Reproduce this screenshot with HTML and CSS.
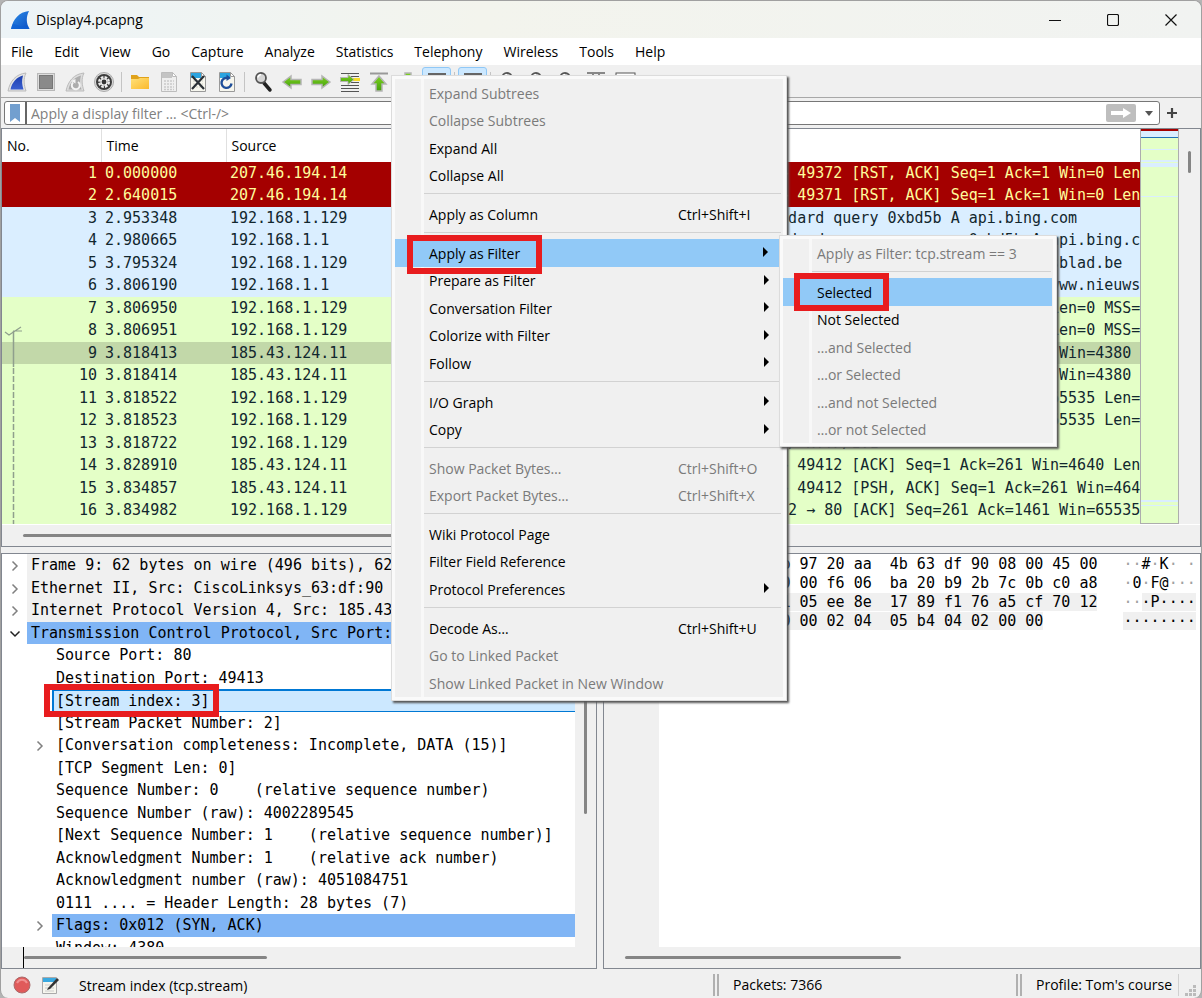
FILE: index.html
```html
<!DOCTYPE html>
<html lang="en">
<head>
    <meta charset="UTF-8">
    <meta name="viewport" content="width=device-width, initial-scale=1.0">
    <title>Display4.pcapng</title>
    <link rel="stylesheet" href="styles.css">
</head>
<body>
    <!-- Shared symbols -->
    <svg class="defs" width="0" height="0" aria-hidden="true">
        <defs>
            <linearGradient id="finBlue" x1="0" y1="0" x2="1" y2="1">
                <stop offset="0" stop-color="#2f8fe8"/>
                <stop offset="1" stop-color="#0a4fc4"/>
            </linearGradient>
            <linearGradient id="finDark" x1="0" y1="0" x2="0" y2="1">
                <stop offset="0" stop-color="#1d3fae"/>
                <stop offset="1" stop-color="#3a5fd0"/>
            </linearGradient>
            <linearGradient id="green" x1="0" y1="0" x2="0" y2="1">
                <stop offset="0" stop-color="#7ed321"/>
                <stop offset="1" stop-color="#45a00c"/>
            </linearGradient>
            <linearGradient id="folder" x1="0" y1="0" x2="1" y2="1">
                <stop offset="0" stop-color="#ffe17a"/>
                <stop offset="1" stop-color="#fbb92c"/>
            </linearGradient>
            <symbol id="chevron" viewBox="0 0 12 12"><path d="M3.500 1.500l4.500 4.500-4.500 4.500" fill="none" stroke="currentColor" stroke-width="1.500"/></symbol>
            <symbol id="magnifier" viewBox="0 0 22 22">
                <path d="M12 12l6 7" stroke="#222" stroke-width="3.500" stroke-linecap="round"/>
                <circle cx="9" cy="7" r="5" fill="#d6d6d6" stroke="#555" stroke-width="1.800"/>
                <path d="M6 6.500a3.500 3.500 0 0 1 3-3" stroke="#fff" stroke-width="1.500" fill="none"/>
            </symbol>
        </defs>
    </svg>

    <div class="window">
        <header class="titlebar">
            <svg class="app-icon" width="20" height="20" viewBox="0 0 20 20"><path d="M1 19C3 9 9 2 19 1c-3 6-3 12 .5 18z" fill="url(#finBlue)"/><path d="M1 19c.5-2 1-3.500 2-5.500 5 2.500 10 3.500 15.500 3l1 2.500z" fill="#0b5fd6" opacity=".6"/></svg>
            <h1 class="title">Display4.pcapng</h1>
            <div class="window-controls">
                <button aria-label="Minimize"><svg width="12" height="12"><path d="M0 6.500h12" stroke="#111"/></svg></button>
                <button aria-label="Maximize"><svg width="12" height="12"><rect x=".5" y=".5" width="11" height="11" rx="1.500" fill="none" stroke="#111" stroke-width="1.200"/></svg></button>
                <button aria-label="Close"><svg width="12" height="12"><path d="M.5 .5l11 11M11.500 .5l-11 11" stroke="#111" stroke-width="1.200"/></svg></button>
            </div>
        </header>

        <nav class="menubar">
            <button>File</button>
            <button>Edit</button>
            <button>View</button>
            <button>Go</button>
            <button>Capture</button>
            <button>Analyze</button>
            <button>Statistics</button>
            <button>Telephony</button>
            <button>Wireless</button>
            <button>Tools</button>
            <button>Help</button>
        </nav>

        <div class="toolbar">
            <button aria-label="Start capture"><svg width="22" height="22" viewBox="0 0 22 22"><path d="M2 20C4 10 10 3 20 2c-3 6-2 12 0 18z" fill="#e4e4e4" stroke="#bbb"/><path d="M4.500 18.500C6 11 11 6 17 4.500c-1.500 5-1 9.500 .5 14z" fill="url(#finDark)"/></svg></button>
            <button aria-label="Stop capture"><svg width="22" height="22" viewBox="0 0 22 22"><rect x="2.500" y="2.500" width="17" height="17" fill="#ddd" stroke="#b8b8b8"/><rect x="4.500" y="4.500" width="13" height="13" fill="#8a8a8a" stroke="#777"/></svg></button>
            <button aria-label="Restart capture"><svg width="22" height="22" viewBox="0 0 22 22"><path d="M2 20C4 10 10 3 20 2c-3 6-2 12 0 18z" fill="#ddd" stroke="#bbb"/><path d="M4.500 18.500C6 11 11 6 17 4.500c-1.500 5-1 9.500 .5 14z" fill="#adadad"/><path d="M9 11.500a4 4 0 1 0 5-.5" fill="none" stroke="#f4f4f4" stroke-width="2"/><path d="M7 10l4.500-2v4.500z" fill="#f4f4f4"/></svg></button>
            <button aria-label="Capture options"><svg width="22" height="22" viewBox="0 0 22 22"><circle cx="11" cy="11" r="9.500" fill="#ddd" stroke="#aaa"/><circle cx="11" cy="11" r="8" fill="#3c3c3c"/><circle cx="11" cy="11" r="4.800" fill="none" stroke="#eee" stroke-width="2.400" stroke-dasharray="2.600 1.170"/><circle cx="11" cy="11" r="3.700" fill="#eee"/><circle cx="11" cy="11" r="2.400" fill="#333"/></svg></button>
            <span class="tool-sep"></span>
            <button aria-label="Open"><svg width="22" height="22" viewBox="0 0 22 22"><path d="M2 4h6l2 2h10v12H2z" fill="#e0a21a"/><path d="M2 8h7l2-1h9v11H2z" fill="url(#folder)"/></svg></button>
            <button aria-label="Save"><svg width="22" height="22" viewBox="0 0 22 22"><path d="M3.500 1.500h11l4 4v15h-15z" fill="#efefef" stroke="#bdbdbd"/><path d="M4 2h10v5H4z" fill="#c4c4c4"/><path d="M14.500 1.500v4h4z" fill="#fff" stroke="#bbb"/><path d="M6 10h10M6 13h10M6 16h10M6 18.500h10" stroke="#cacaca" stroke-width="1.600" stroke-dasharray="2 1"/></svg></button>
            <button aria-label="Close file"><svg width="22" height="22" viewBox="0 0 22 22"><path d="M3.500 1.500h11l4 4v15h-15z" fill="#f6f6ee" stroke="#999"/><path d="M4 2h10v5H4z" fill="#2ba4e0"/><path d="M14.500 1.500v4h4z" fill="#fff" stroke="#999"/><path d="M6 10h10M6 13h10M6 16h10" stroke="#d0d0c4" stroke-dasharray="2 1"/><path d="M5 5l12 13M17 5L5 18" stroke="#2a3036" stroke-width="2.200"/></svg></button>
            <button aria-label="Reload file"><svg width="22" height="22" viewBox="0 0 22 22"><path d="M3.500 1.500h11l4 4v15h-15z" fill="#f6f6ee" stroke="#999"/><path d="M4 2h10v5H4z" fill="#2ba4e0"/><path d="M14.500 1.500v4h4z" fill="#fff" stroke="#999"/><path d="M15.500 12.500a5 5 0 1 1-4-5.500" fill="none" stroke="#1f4f9a" stroke-width="2.400"/><path d="M10.500 3.500l4.500 3.500-4.500 3z" fill="#1f4f9a"/></svg></button>
            <span class="tool-sep"></span>
            <button aria-label="Find packet"><svg width="22" height="22"><use href="#magnifier"/></svg></button>
            <button aria-label="Previous packet"><svg width="22" height="22" viewBox="0 0 22 22"><path d="M2 11l8-6v3.500h10v5H10V17z" fill="url(#green)" stroke="#b5b5b5" stroke-width="1.500"/></svg></button>
            <button aria-label="Next packet"><svg width="22" height="22" viewBox="0 0 22 22"><path d="M20 11l-8-6v3.500H2v5h10V17z" fill="url(#green)" stroke="#b5b5b5" stroke-width="1.500"/></svg></button>
            <button aria-label="Go to packet"><svg width="22" height="22" viewBox="0 0 22 22"><path d="M2 2.500h18M12 5.500h8M12 11.500h8M2 14.500h18M2 17.500h18M2 20.500h18" stroke="#555" stroke-width="1.200"/><path d="M13 8.500h8" stroke="#f7dc2a" stroke-width="3"/><path d="M15 8.500L9 3.500v3H1.500v4H9v3z" fill="url(#green)" stroke="#b5b5b5"/></svg></button>
            <button aria-label="First packet"><svg width="22" height="22" viewBox="0 0 22 22"><path d="M2 2.500h18" stroke="#999" stroke-width="2"/><path d="M11 5l7 8h-4v7H8v-7H4z" fill="url(#green)" stroke="#b5b5b5" stroke-width="1.500"/></svg></button>
            <button aria-label="Last packet"><svg width="22" height="22" viewBox="0 0 22 22"><path d="M11 17L4 9h4V2h6v7h4z" fill="url(#green)" stroke="#b5b5b5" stroke-width="1.500"/><path d="M2 19.500h18" stroke="#999" stroke-width="2"/></svg></button>
            <button class="toggled" aria-label="Auto scroll" aria-pressed="true"><svg width="22" height="22" viewBox="0 0 22 22"><path d="M2 3h18M2 7h18M2 11h18M2 15h18" stroke="#666" stroke-width="2"/></svg></button>
            <span class="tool-sep"></span>
            <button class="toggled" aria-label="Colorize" aria-pressed="true"><svg width="22" height="22" viewBox="0 0 22 22"><path d="M2 3h18M2 7h18M2 11h18M2 15h18" stroke="#666" stroke-width="2"/></svg></button>
            <span class="tool-sep"></span>
            <button aria-label="Zoom in"><svg width="22" height="22"><use href="#magnifier"/></svg></button>
            <button aria-label="Zoom out"><svg width="22" height="22"><use href="#magnifier"/></svg></button>
            <button aria-label="Normal size"><svg width="22" height="22"><use href="#magnifier"/></svg></button>
            <button aria-label="Resize columns"><svg width="22" height="22" viewBox="0 0 22 22"><path d="M2 2h18M8 2v18M14 2v18" fill="none" stroke="#888" stroke-width="2"/></svg></button>
            <button aria-label="Reset layout"><svg width="22" height="22" viewBox="0 0 22 22"><rect x="2" y="2" width="19" height="17" fill="#fff" stroke="#555"/></svg></button>
        </div>

        <div class="filterbar">
            <div class="filter-box">
                <button class="bookmark" aria-label="Filter bookmarks"><svg width="12" height="18" viewBox="0 0 12 18"><path d="M1 0h10v18l-5-4-5 4z" fill="#729fcf"/></svg></button>
                <input type="text" class="filter-input" aria-label="Display filter" placeholder="Apply a display filter … &lt;Ctrl-/&gt;">
                <button class="apply" aria-label="Apply filter"><svg width="22" height="12" viewBox="0 0 22 12"><path d="M1 4h12V1l8 5-8 5V8H1z" fill="#fff"/></svg></button>
                <div class="history"><select aria-label="Recent filters"></select></div>
            </div>
            <button class="add" aria-label="Add filter button"><svg width="10" height="10"><path d="M5 0v10M0 5h10" stroke="#444" stroke-width="2.200"/></svg></button>
        </div>

        <section class="packet-list">
            <div class="packet-main">
                <div class="packet-view">
                    <table class="packets">
                        <colgroup><col class="col-no"><col class="col-time"><col class="col-source"><col></colgroup>
                        <thead>
                            <tr><th>No.</th><th>Time</th><th>Source</th><th></th></tr>
                        </thead>
                        <tbody>
                            <tr class="rst"><td>1</td><td>0.000000</td><td>207.46.194.14</td><td>80 → 49372 [RST, ACK] Seq=1 Ack=1 Win=0 Len=0</td></tr>
                            <tr class="rst"><td>2</td><td>2.640015</td><td>207.46.194.14</td><td>80 → 49371 [RST, ACK] Seq=1 Ack=1 Win=0 Len=0</td></tr>
                            <tr class="dns"><td>3</td><td>2.953348</td><td>192.168.1.129</td><td>Standard query 0xbd5b A api.bing.com</td></tr>
                            <tr class="dns"><td>4</td><td>2.980665</td><td>192.168.1.1</td><td>Standard query response 0xbd5b A api.bing.com</td></tr>
                            <tr class="dns"><td>5</td><td>3.795324</td><td>192.168.1.129</td><td>Standard query 0x2f6c A www.nieuwsblad.be</td></tr>
                            <tr class="dns"><td>6</td><td>3.806190</td><td>192.168.1.1</td><td>Standard query response 0x2f6c A www.nieuwsblad.be</td></tr>
                            <tr><td>7</td><td>3.806950</td><td>192.168.1.129</td><td>49412 → 80 [SYN] Seq=0 Win=65535 Len=0 MSS=1460</td></tr>
                            <tr><td>8</td><td>3.806951</td><td>192.168.1.129</td><td>49413 → 80 [SYN] Seq=0 Win=65535 Len=0 MSS=1460</td></tr>
                            <tr class="current"><td>9</td><td>3.818413</td><td>185.43.124.11</td><td>80 → 49413 [SYN, ACK] Seq=0 Ack=1 Win=4380 Len=0</td></tr>
                            <tr><td>10</td><td>3.818414</td><td>185.43.124.11</td><td>80 → 49412 [SYN, ACK] Seq=0 Ack=1 Win=4380 Len=0</td></tr>
                            <tr><td>11</td><td>3.818522</td><td>192.168.1.129</td><td>49413 → 80 [ACK] Seq=1 Ack=1 Win=65535 Len=0</td></tr>
                            <tr><td>12</td><td>3.818523</td><td>192.168.1.129</td><td>49412 → 80 [ACK] Seq=1 Ack=1 Win=65535 Len=0</td></tr>
                            <tr><td>13</td><td>3.818722</td><td>192.168.1.129</td><td>GET / HTTP/1.1</td></tr>
                            <tr><td>14</td><td>3.828910</td><td>185.43.124.11</td><td>80 → 49412 [ACK] Seq=1 Ack=261 Win=4640 Len=0</td></tr>
                            <tr><td>15</td><td>3.834857</td><td>185.43.124.11</td><td>80 → 49412 [PSH, ACK] Seq=1 Ack=261 Win=4640 Len=1460</td></tr>
                            <tr><td>16</td><td>3.834982</td><td>192.168.1.129</td><td>49412 → 80 [ACK] Seq=261 Ack=1461 Win=65535 Len=0</td></tr>
                        </tbody>
                    </table>
                    <!-- Conversation marker in the No. column -->
                    <svg class="related" width="24" height="200" viewBox="0 0 24 200">
                        <path d="M3 6l4 3 12-8M11 5h9" fill="none" stroke="#8f9f8d" stroke-width="1.200"/>
                        <path d="M11.500 5v36" stroke="#8f9f8d" stroke-width="1.500"/>
                        <path d="M11.500 42v158" stroke="#8f9f8d" stroke-width="1.500" stroke-dasharray="6 2"/>
                    </svg>
                </div>
                <div class="minimap"></div>
                <div class="vscroll"><span class="thumb packet-vthumb"></span></div>
            </div>
            <div class="hscroll"><span class="thumb packet-hthumb"></span></div>
        </section>

        <main class="panes">
            <section class="pane details">
                <div class="pane-main">
                    <ul class="tree">
                        <li class="proto"><svg class="twisty" width="12" height="12"><use href="#chevron"/></svg><span>Frame 9: 62 bytes on wire (496 bits), 62 bytes captured</span></li>
                        <li class="proto"><svg class="twisty" width="12" height="12"><use href="#chevron"/></svg><span>Ethernet II, Src: CiscoLinksys_63:df:90 (20:aa:4b:63:df:90)</span></li>
                        <li class="proto"><svg class="twisty" width="12" height="12"><use href="#chevron"/></svg><span>Internet Protocol Version 4, Src: 185.43.124.11</span></li>
                        <li class="proto marked"><svg class="twisty open" width="12" height="12"><use href="#chevron"/></svg><span>Transmission Control Protocol, Src Port: 80</span></li>
                        <li class="field"><span>Source Port: 80</span></li>
                        <li class="field"><span>Destination Port: 49413</span></li>
                        <li class="field selected"><span>[Stream index: 3]</span><i class="callout callout-stream"></i></li>
                        <li class="field"><span>[Stream Packet Number: 2]</span></li>
                        <li class="field"><svg class="twisty" width="12" height="12"><use href="#chevron"/></svg><span>[Conversation completeness: Incomplete, DATA (15)]</span></li>
                        <li class="field"><span>[TCP Segment Len: 0]</span></li>
                        <li class="field"><span>Sequence Number: 0    (relative sequence number)</span></li>
                        <li class="field"><span>Sequence Number (raw): 4002289545</span></li>
                        <li class="field"><span>[Next Sequence Number: 1    (relative sequence number)]</span></li>
                        <li class="field"><span>Acknowledgment Number: 1    (relative ack number)</span></li>
                        <li class="field"><span>Acknowledgment number (raw): 4051084751</span></li>
                        <li class="field"><span>0111 .... = Header Length: 28 bytes (7)</span></li>
                        <li class="field marked"><svg class="twisty" width="12" height="12"><use href="#chevron"/></svg><span>Flags: 0x012 (SYN, ACK)</span></li>
                        <li class="field"><span>Window: 4380</span></li>
                    </ul>
                    <div class="vscroll"><span class="thumb tree-vthumb"></span></div>
                </div>
                <div class="hscroll caret"><span class="thumb tree-hthumb"></span></div>
            </section>

            <section class="pane bytes">
                <div class="pane-main">
                    <div class="offsets">
                        <pre>0000
0010
0020
0030</pre>
                    </div>
                    <div class="dump">
                        <pre>00 16 23 cb 4b 97 20 aa  4b 63 df 90 08 00 45 00
00 30 8a 46 40 00 f6 06  ba 20 b9 2b 7c 0b c0 a8
01 81 <mark>00 50 c1 05 ee 8e  17 89 f1 76 a5 cf 70 12</mark>
<mark>11 1c d1 5c 00 00 02 04  05 b4 04 02 00 00</mark></pre>
                        <pre class="ascii"><s>··</s>#<s>·</s>K<s>·</s> <s>·</s>
<s>·</s>0<s>·</s>F@<s>···</s>
<s>··</s><mark>·P····</mark>
<mark>········</mark></pre>
                    </div>
                </div>
                <div class="hscroll"><span class="thumb bytes-hthumb"></span></div>
            </section>
        </main>

        <footer class="statusbar">
            <button aria-label="Expert information"><svg width="18" height="18"><circle cx="9" cy="9" r="8" fill="#e05a5a" stroke="#a86a6a"/><path d="M4 7a5.500 5.500 0 0 1 10 0" fill="none" stroke="#f09090" stroke-width="2"/></svg></button>
            <button aria-label="Capture comment"><svg width="18" height="18" viewBox="0 0 18 18"><path d="M.5 1.500h14v16H.5z" fill="#f6f6ee" stroke="#aaa"/><path d="M1 2h13v4H1z" fill="#3aa9e0"/><path d="M3 9h9M3 12h9M3 15h9" stroke="#ccc"/><path d="M6 12L15 2l2 2-9 9-3 1z" fill="#333"/></svg></button>
            <span class="status-field">Stream index (tcp.stream)</span>
            <span class="status-packets">Packets: 7366</span>
            <span class="status-profile">Profile: Tom's course</span>
            <svg class="grip" width="12" height="12"><path d="M8 0h3v3H8zM4 4h3v3H4zM8 4h3v3H8zM0 8h3v3H0zM4 8h3v3H4zM8 8h3v3H8z" fill="#bbb"/></svg>
        </footer>
    </div>

    <div class="context-menu main-menu" role="menu">
        <ul>
            <li><button disabled>Expand Subtrees</button></li>
            <li><button disabled>Collapse Subtrees</button></li>
            <li><button>Expand All</button></li>
            <li><button>Collapse All</button></li>
        </ul>
        <hr>
        <ul>
            <li><button>Apply as Column<kbd>Ctrl+Shift+I</kbd></button></li>
        </ul>
        <hr>
        <ul>
            <li class="has-sub active">
                <button>Apply as Filter</button>
                <i class="callout callout-apply"></i>
                <div class="context-menu sub-menu" role="menu">
                    <ul>
                        <li><button disabled>Apply as Filter: tcp.stream == 3</button></li>
                    </ul>
                    <hr>
                    <ul>
                        <li class="active"><button>Selected</button><i class="callout callout-selected"></i></li>
                        <li><button>Not Selected</button></li>
                        <li><button disabled>…and Selected</button></li>
                        <li><button disabled>…or Selected</button></li>
                        <li><button disabled>…and not Selected</button></li>
                        <li><button disabled>…or not Selected</button></li>
                    </ul>
                </div>
            </li>
            <li class="has-sub"><button>Prepare as Filter</button></li>
            <li class="has-sub"><button>Conversation Filter</button></li>
            <li class="has-sub"><button>Colorize with Filter</button></li>
            <li class="has-sub"><button>Follow</button></li>
        </ul>
        <hr>
        <ul>
            <li class="has-sub"><button>I/O Graph</button></li>
            <li class="has-sub"><button>Copy</button></li>
        </ul>
        <hr>
        <ul>
            <li><button disabled>Show Packet Bytes…<kbd>Ctrl+Shift+O</kbd></button></li>
            <li><button disabled>Export Packet Bytes…<kbd>Ctrl+Shift+X</kbd></button></li>
        </ul>
        <hr>
        <ul>
            <li><button>Wiki Protocol Page</button></li>
            <li><button>Filter Field Reference</button></li>
            <li class="has-sub"><button>Protocol Preferences</button></li>
        </ul>
        <hr>
        <ul>
            <li><button>Decode As…<kbd>Ctrl+Shift+U</kbd></button></li>
            <li><button disabled>Go to Linked Packet</button></li>
            <li><button disabled>Show Linked Packet in New Window</button></li>
        </ul>
    </div>
</body>
</html>
```
FILE: styles.css
```css
* {
    box-sizing: border-box;
}
body {
    margin: 0;
    background: #b4b4b4;
    color: #000;
    font-family: "Open Sans", "Noto Sans", sans-serif;
    font-size: 14px;
    overflow: hidden;
}
button {
    border: none;
    padding: 0;
    background: none;
    color: inherit;
    font: inherit;
}
ul {
    list-style: none;
    margin: 0;
    padding: 0;
}
.defs {
    position: absolute;
}
.window {
    display: flex;
    flex-direction: column;
    height: 100vh;
    background: #f0f0f0;
    border: 1px solid #a0a0a0;
    border-bottom: none;
    border-radius: 8px;
    overflow: hidden;
}

/* Title bar */
.titlebar {
    display: flex;
    align-items: center;
    flex: none;
    height: 37px;
    padding-left: 9px;
    background: linear-gradient(90deg, #edf4f7, #f3f4ed 40%, #f1f3f1);
}
.title {
    flex: 1;
    margin: 0 0 0 6px;
    font-size: 14px;
    font-weight: normal;
}
.window-controls {
    display: flex;
    margin-right: 1px;
}
.window-controls button {
    display: flex;
    align-items: center;
    justify-content: center;
    width: 58px;
    height: 36px;
}

/* Menu bar */
.menubar {
    display: flex;
    gap: 21px;
    flex: none;
    height: 27px;
    padding: 0 10px;
    background: #fff;
}

/* Toolbar */
.toolbar {
    display: flex;
    align-items: center;
    flex: none;
    height: 33px;
    padding: 1px 0 0 1px;
    border-bottom: 1px solid #a8a8a8;
}
.toolbar button {
    display: flex;
    align-items: center;
    justify-content: center;
    width: 29px;
    height: 29px;
    border-radius: 3px;
}
.toolbar .toggled {
    background: #cce8ff;
    border: 1px solid #90c8f6;
}
.tool-sep {
    width: 1px;
    height: 20px;
    margin: 0 3px;
    background: #c4c4c4;
}

/* Display filter */
.filterbar {
    display: flex;
    align-items: center;
    flex: none;
    gap: 7px;
    height: 30px;
    padding: 0 24px 0 3px;
}
.filter-box {
    display: flex;
    align-items: center;
    flex: 1;
    height: 24px;
    background: #fff;
    border: 1px solid #777;
    border-radius: 3px;
}
.bookmark {
    display: flex;
    align-items: center;
    justify-content: center;
    width: 22px;
    height: 22px;
    border-right: 2px solid #666;
}
.filter-input {
    flex: 1;
    min-width: 0;
    border: none;
    outline: none;
    padding: 0 4px;
    background: none;
    font: inherit;
}
.filter-input::placeholder {
    color: #808080;
    opacity: 1;
}
.apply {
    display: flex;
    align-items: center;
    justify-content: center;
    width: 30px;
    height: 18px;
    border-radius: 2px;
    background: #bebebe;
}
.history {
    display: flex;
    align-items: center;
    justify-content: center;
    position: relative;
    width: 20px;
    height: 22px;
    margin-left: 3px;
}
.history select {
    appearance: none;
    width: 100%;
    height: 100%;
    border: none;
    background: none;
}
.history::after {
    content: "";
    position: absolute;
    border: 4px solid transparent;
    border-top: 5px solid #555;
    border-bottom: none;
    pointer-events: none;
}
.add {
    display: flex;
}

/* Packet list */
.packet-list {
    flex: none;
    border: 1px solid #828790;
}
.packet-main {
    display: flex;
    border-bottom: 1px solid #fff;
}
.packet-view {
    position: relative;
    flex: 1;
    min-width: 0;
    padding-bottom: 2px;
    overflow: hidden;
    background: #e4ffc7;
}
.packets {
    width: 100%;
    table-layout: fixed;
    border-collapse: collapse;
    color: #12272e;
    font-family: "DejaVu Sans Mono", monospace;
    font-size: 15px;
    line-height: 22px;
    white-space: nowrap;
}
.col-no {
    width: 99px;
}
.col-time {
    width: 125px;
}
.col-source {
    width: 522px;
}
.packets th {
    height: 33px;
    padding: 0 5px;
    background: #fff;
    border-right: 1px solid #e0e0e0;
    color: #000;
    font-family: "Open Sans", "Noto Sans", sans-serif;
    font-size: 14px;
    font-weight: normal;
    text-align: left;
}
.packets th:last-child {
    border-right: none;
}
.packets td {
    height: 22px;
    padding: 0 4px;
    overflow: hidden;
    vertical-align: top;
}
.packets tr:nth-child(even) td {
    height: 23px;
}
.packets td:first-child {
    text-align: right;
}
.packets td:last-child {
    padding-right: 0;
}
.packets .rst {
    background: #a40000;
    color: #fffc9c;
}
.packets .dns {
    background: #daeeff;
}
.packets .current {
    background: #c2d8a9;
}
.related {
    position: absolute;
    left: 0;
    top: 197px;
}
.minimap {
    width: 39px;
    border: 1px solid #adadad;
    border-top: none;
    background: linear-gradient(#a40000 2px, #daeeff 2px, #daeeff 8px, #2272b8 8px, #2272b8 9px,
        #e4ffc7 9px, #e4ffc7 20px, #daeeff 20px, #daeeff 21px, #e4ffc7 21px, #e4ffc7 31px,
        #daeeff 31px, #daeeff 33px, #e4ffc7 33px, #e4ffc7 34px, #daeeff 34px, #daeeff 38px,
        #e4ffc7 38px, #e4ffc7 67px, #daeeff 67px, #daeeff 68px, #e4ffc7 68px, #e4ffc7 371px,
        #daeeff 371px, #daeeff 373px, #e4ffc7 373px, #e4ffc7 376px, #daeeff 376px, #daeeff 377px,
        #e4ffc7 377px);
}

/* Scroll bars */
.vscroll {
    flex: none;
    width: 21px;
    background: #f0f0f0;
}
.hscroll {
    display: flex;
    align-items: center;
    flex: none;
    height: 21px;
    padding-left: 21px;
}
.thumb {
    display: block;
    width: 3px;
    height: 3px;
    border-radius: 2px;
    background: #858585;
}
.packet-vthumb {
    height: 22px;
    margin: 22px 0 0 9px;
}
.packet-hthumb {
    width: 60%;
}
.tree-vthumb {
    height: 260px;
    margin-left: 9px;
}
.tree-hthumb {
    width: 243px;
}
.bytes-hthumb {
    width: 276px;
}

/* Lower panes */
.panes {
    display: grid;
    grid-template-columns: 596fr 598fr;
    gap: 6px;
    flex: 1;
    min-height: 0;
    margin-top: 6px;
}
.pane {
    display: flex;
    flex-direction: column;
    min-width: 0;
    min-height: 0;
    border: 1px solid #828790;
}
.pane-main {
    display: flex;
    flex: 1;
    min-height: 0;
    overflow: hidden;
    background: #fff;
}
.tree {
    flex: 1;
    min-width: 0;
    font-family: "DejaVu Sans Mono", monospace;
    font-size: 15px;
    line-height: 23px;
}
.tree li {
    display: flex;
    position: relative;
    height: 23px;
}
.tree li:nth-child(even) {
    height: 22px;
}
.tree span {
    flex: 1;
    min-width: 0;
    padding-left: 4px;
    overflow: hidden;
    white-space: pre;
}
.proto {
    padding-left: 25px;
}
.field {
    padding-left: 50px;
}
.proto span {
    background: #f0f0f0;
}
.tree .marked span {
    background: #80b5f5;
}
.tree .selected span {
    padding-left: 2px;
    border: 2px solid #0078d4;
    border-right: none;
    border-bottom-width: 1px;
    background: #cce8ff;
    line-height: 20px;
}
.twisty {
    position: absolute;
    left: 7px;
    top: 6px;
    color: #808080;
}
.field .twisty {
    left: 32px;
}
.twisty.open {
    color: #222;
    transform: rotate(90deg);
}
.hscroll.caret {
    border-left: 1px solid #000;
    margin-left: 21px;
    padding-left: 0;
}
.offsets {
    flex: none;
    width: 55px;
    padding: 1px 0 0 8px;
    background: #f0f0f0;
}
.dump {
    display: flex;
    gap: 26px;
    flex: 1;
    min-width: 0;
    padding: 1px 0 0 5px;
    overflow: hidden;
}
pre {
    margin: 0;
    font-family: "DejaVu Sans Mono", monospace;
    font-size: 15px;
    line-height: 19px;
}
mark {
    background: #f0f0f0;
    color: inherit;
}
.ascii s {
    color: #a0a0a0;
    text-decoration: none;
}

/* Status bar */
.statusbar {
    display: flex;
    align-items: center;
    flex: none;
    height: 29px;
    padding: 3px 0 0 12px;
}
.statusbar button {
    display: flex;
    margin-right: 11px;
}
.status-field {
    flex: 1;
    padding-left: 8px;
}
.status-packets,
.status-profile {
    padding-left: 14px;
    border-left: 6px double #b0b0b0;
    line-height: 22px;
}
.status-packets {
    width: 303px;
}
.status-profile {
    padding-right: 6px;
    border-right: 1px solid #d0d0d0;
}
.grip {
    align-self: flex-end;
    margin: 0 4px 1px 6px;
}

/* Context menus */
.context-menu {
    position: absolute;
    padding: 3px;
    background: #f0f0f0;
    border: 1px solid #dcdcdc;
    box-shadow: inset 0 0 0 3px #fafafa, 2px 2px 2px #555;
}
.main-menu {
    left: 391px;
    top: 75px;
    width: 396px;
}
.sub-menu {
    left: calc(100% - 4px);
    top: -4px;
    z-index: 1;
    width: 278px;
}
.context-menu::before {
    content: "";
    position: absolute;
    left: 29px;
    top: 3px;
    bottom: 3px;
    width: 3px;
    background: #f8f8f8;
}
.context-menu hr {
    height: 1px;
    margin: 4px 2px 6px 29px;
    border: none;
    background: #d2d2d2;
}
.context-menu li {
    position: relative;
    height: 27px;
}
.context-menu li:nth-child(odd) {
    height: 28px;
}
.context-menu li > button {
    display: flex;
    align-items: center;
    position: relative;
    width: 100%;
    height: 100%;
    padding-left: 34px;
    text-align: left;
}
.context-menu li > button:disabled {
    color: #7a7a7a;
}
.context-menu .active > button {
    width: calc(100% - 1px);
    background: #91c9f7;
}
.context-menu kbd {
    width: 105px;
    margin-left: auto;
    font: inherit;
}
.has-sub > button::after {
    content: "";
    position: absolute;
    right: 14px;
    top: 8px;
    border: 5px solid transparent;
    border-left-color: #000;
    border-right: none;
}

/* Red frames */
.callout {
    position: absolute;
    z-index: 2;
    border: 6px solid #e81c1e;
    pointer-events: none;
}
.callout-apply {
    left: 12px;
    top: -4px;
    width: 135px;
    height: 39px;
}
.callout-selected {
    left: 11px;
    top: -5px;
    width: 95px;
    height: 38px;
}
.callout-stream {
    left: 42px;
    top: -5px;
    width: 175px;
    height: 33px;
}
```
